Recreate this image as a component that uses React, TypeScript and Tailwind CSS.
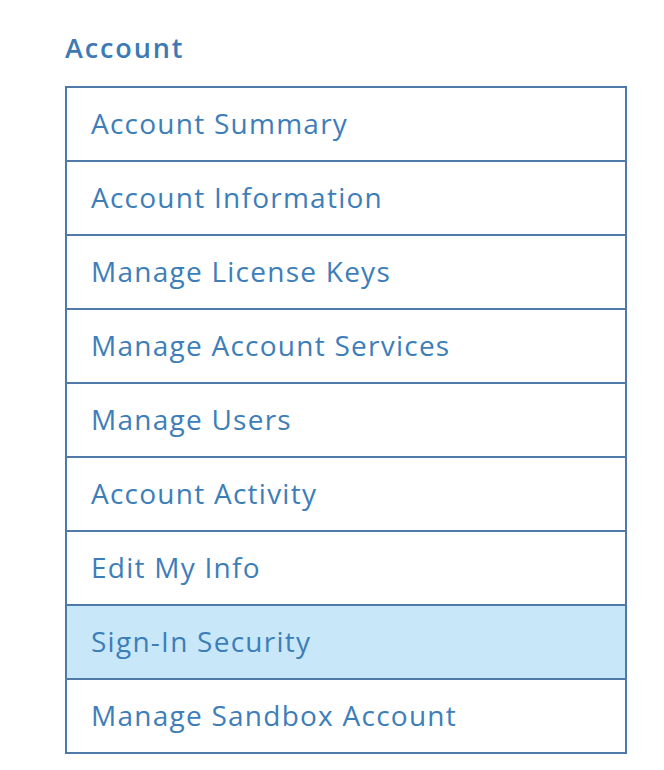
const items = [
  "Account Summary",
  "Account Information",
  "Manage License Keys",
  "Manage Account Services",
  "Manage Users",
  "Account Activity",
  "Edit My Info",
  "Sign-In Security",
  "Manage Sandbox Account",
];

const ACTIVE = "Sign-In Security";

export default function App() {
  return (
    <div className="min-h-[770px] bg-white pl-[65px] pr-[37px] pt-[30px] font-['Open_Sans',sans-serif]">
      <h2 className="text-[27px] font-semibold leading-[36px] tracking-[1.9px] text-[#3b7ab5]">Account</h2>
      <ul className="mt-[20px] border-2 border-[#4f79a7]">
        {items.map((label, i) => (
          <li
            key={label}
            className={`flex h-[72px] items-center pl-[24px] text-[28px] leading-[38px] tracking-[1.25px] text-[#3d7eb9] ${
              i > 0 ? "box-content border-t-2 border-[#4f79a7]" : ""
            } ${label === ACTIVE ? "bg-[#c8e8f9]" : ""}`}
          >
            <span className="-mt-[2px]">{label}</span>
          </li>
        ))}
      </ul>
    </div>
  );
}
